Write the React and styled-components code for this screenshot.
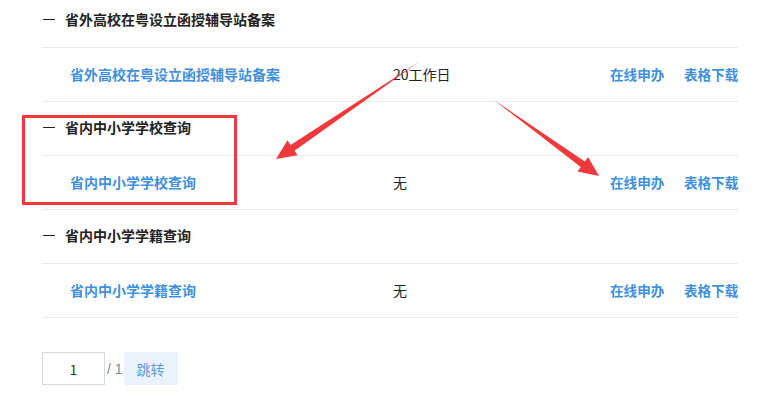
import * as React from 'react';
import styled, {createGlobalStyle} from 'styled-components';

const GlobalStyle = createGlobalStyle`
  body {
    margin: 0;
    background: #fff;
    font-family: "Noto Sans CJK SC", "Noto Sans", sans-serif;
    overflow: hidden;
  }
`;

const Page = styled.div`
  position: relative;
  width: 760px;
  height: 418px;
  overflow: hidden;
`;

const List = styled.div`
  margin: -6px 22px 0 42px;
  display: flex;
  flex-direction: column;
`;

const GroupHead = styled.div`
  height: 54px;
  box-sizing: border-box;
  border-bottom: 1px solid #ebebeb;
  padding: 0 0 3px 1px;
  display: flex;
  align-items: center;
  gap: 10px;
  font-size: 14px;
  font-weight: bold;
  color: #222;
`;

const Dash = styled.span`
  width: 12px;
  height: 1px;
  background: #222;
`;

const ItemRow = styled.div`
  height: 54px;
  box-sizing: border-box;
  border-bottom: 1px solid #ebebeb;
  padding-bottom: 2px;
  display: grid;
  grid-template-columns: 351px 217px 74px 54px;
  align-items: center;
  font-size: 14px;
  white-space: nowrap;
`;

const ItemName = styled.a`
  padding-left: 28px;
  color: #3f8fdd;
  font-weight: bold;
  text-decoration: none;
`;

const Time = styled.span`
  color: #222;
`;

const Action = styled.a`
  color: #3f8fdd;
  font-weight: bold;
  font-size: 13.6px;
  text-decoration: none;
`;

const Pager = styled.div`
  margin: 34px 0 0 42px;
  display: flex;
  align-items: center;
  font-size: 14px;
`;

const PageInput = styled.div`
  width: 63px;
  height: 33px;
  box-sizing: border-box;
  border: 1px solid #d9d9d9;
  display: flex;
  align-items: center;
  justify-content: center;
  color: #333;
`;

const Total = styled.span`
  color: #888;
  margin: 0 1px 0 2px;
  font-family: "Liberation Sans", sans-serif;
  font-size: 14px;
`;

const JumpButton = styled.button`
  width: 54px;
  height: 33px;
  border: none;
  background: #eaf2fb;
  color: #5b9bd8;
  font-family: inherit;
  font-size: 14px;
  padding: 0;
`;

const Overlay = styled.svg`
  position: absolute;
  left: 0;
  top: 0;
  pointer-events: none;
`;

const groups = [
    {title: '省外高校在粤设立函授辅导站备案', time: '20工作日'},
    {title: '省内中小学学校查询', time: '无'},
    {title: '省内中小学学籍查询', time: '无'},
];

// builds a tapered arrow polygon from tail to tip
const arrowPoints = (tx, ty, px, py) => {
    const dx = px - tx;
    const dy = py - ty;
    const len = Math.hypot(dx, dy);
    const ux = dx / len;
    const uy = dy / len;
    const nx = -uy;
    const ny = ux;
    const headLen = 20;
    const shaft = 3.5;
    const head = 9;
    const bx = px - ux * headLen;
    const by = py - uy * headLen;
    const pts = [
        [tx, ty],
        [bx + nx * shaft, by + ny * shaft],
        [bx + nx * head, by + ny * head],
        [px, py],
        [bx - nx * head, by - ny * head],
        [bx - nx * shaft, by - ny * shaft],
    ];
    return pts.map((p) => p.join(',')).join(' ');
};

const App = () => {
    return (
        <Page>
            <GlobalStyle/>
            <List>
                {groups.map((g) => (
                    <React.Fragment key={g.title}>
                        <GroupHead>
                            <Dash/>
                            {g.title}
                        </GroupHead>
                        <ItemRow>
                            <ItemName href="#">{g.title}</ItemName>
                            <Time>{g.time}</Time>
                            <Action href="#">在线申办</Action>
                            <Action href="#">表格下载</Action>
                        </ItemRow>
                    </React.Fragment>
                ))}
            </List>
            <Pager>
                <PageInput>1</PageInput>
                <Total>/ 1</Total>
                <JumpButton>跳转</JumpButton>
            </Pager>
            <Overlay width="760" height="418">
                <rect x="23.5" y="116.5" width="212" height="87" fill="none" stroke="#f0393b" strokeWidth="3"/>
                <polygon points={arrowPoints(419, 62, 276, 159)} fill="#f0393b"/>
                <polygon points={arrowPoints(494, 100, 599, 176)} fill="#f0393b"/>
            </Overlay>
        </Page>
    );
};

export default App;
